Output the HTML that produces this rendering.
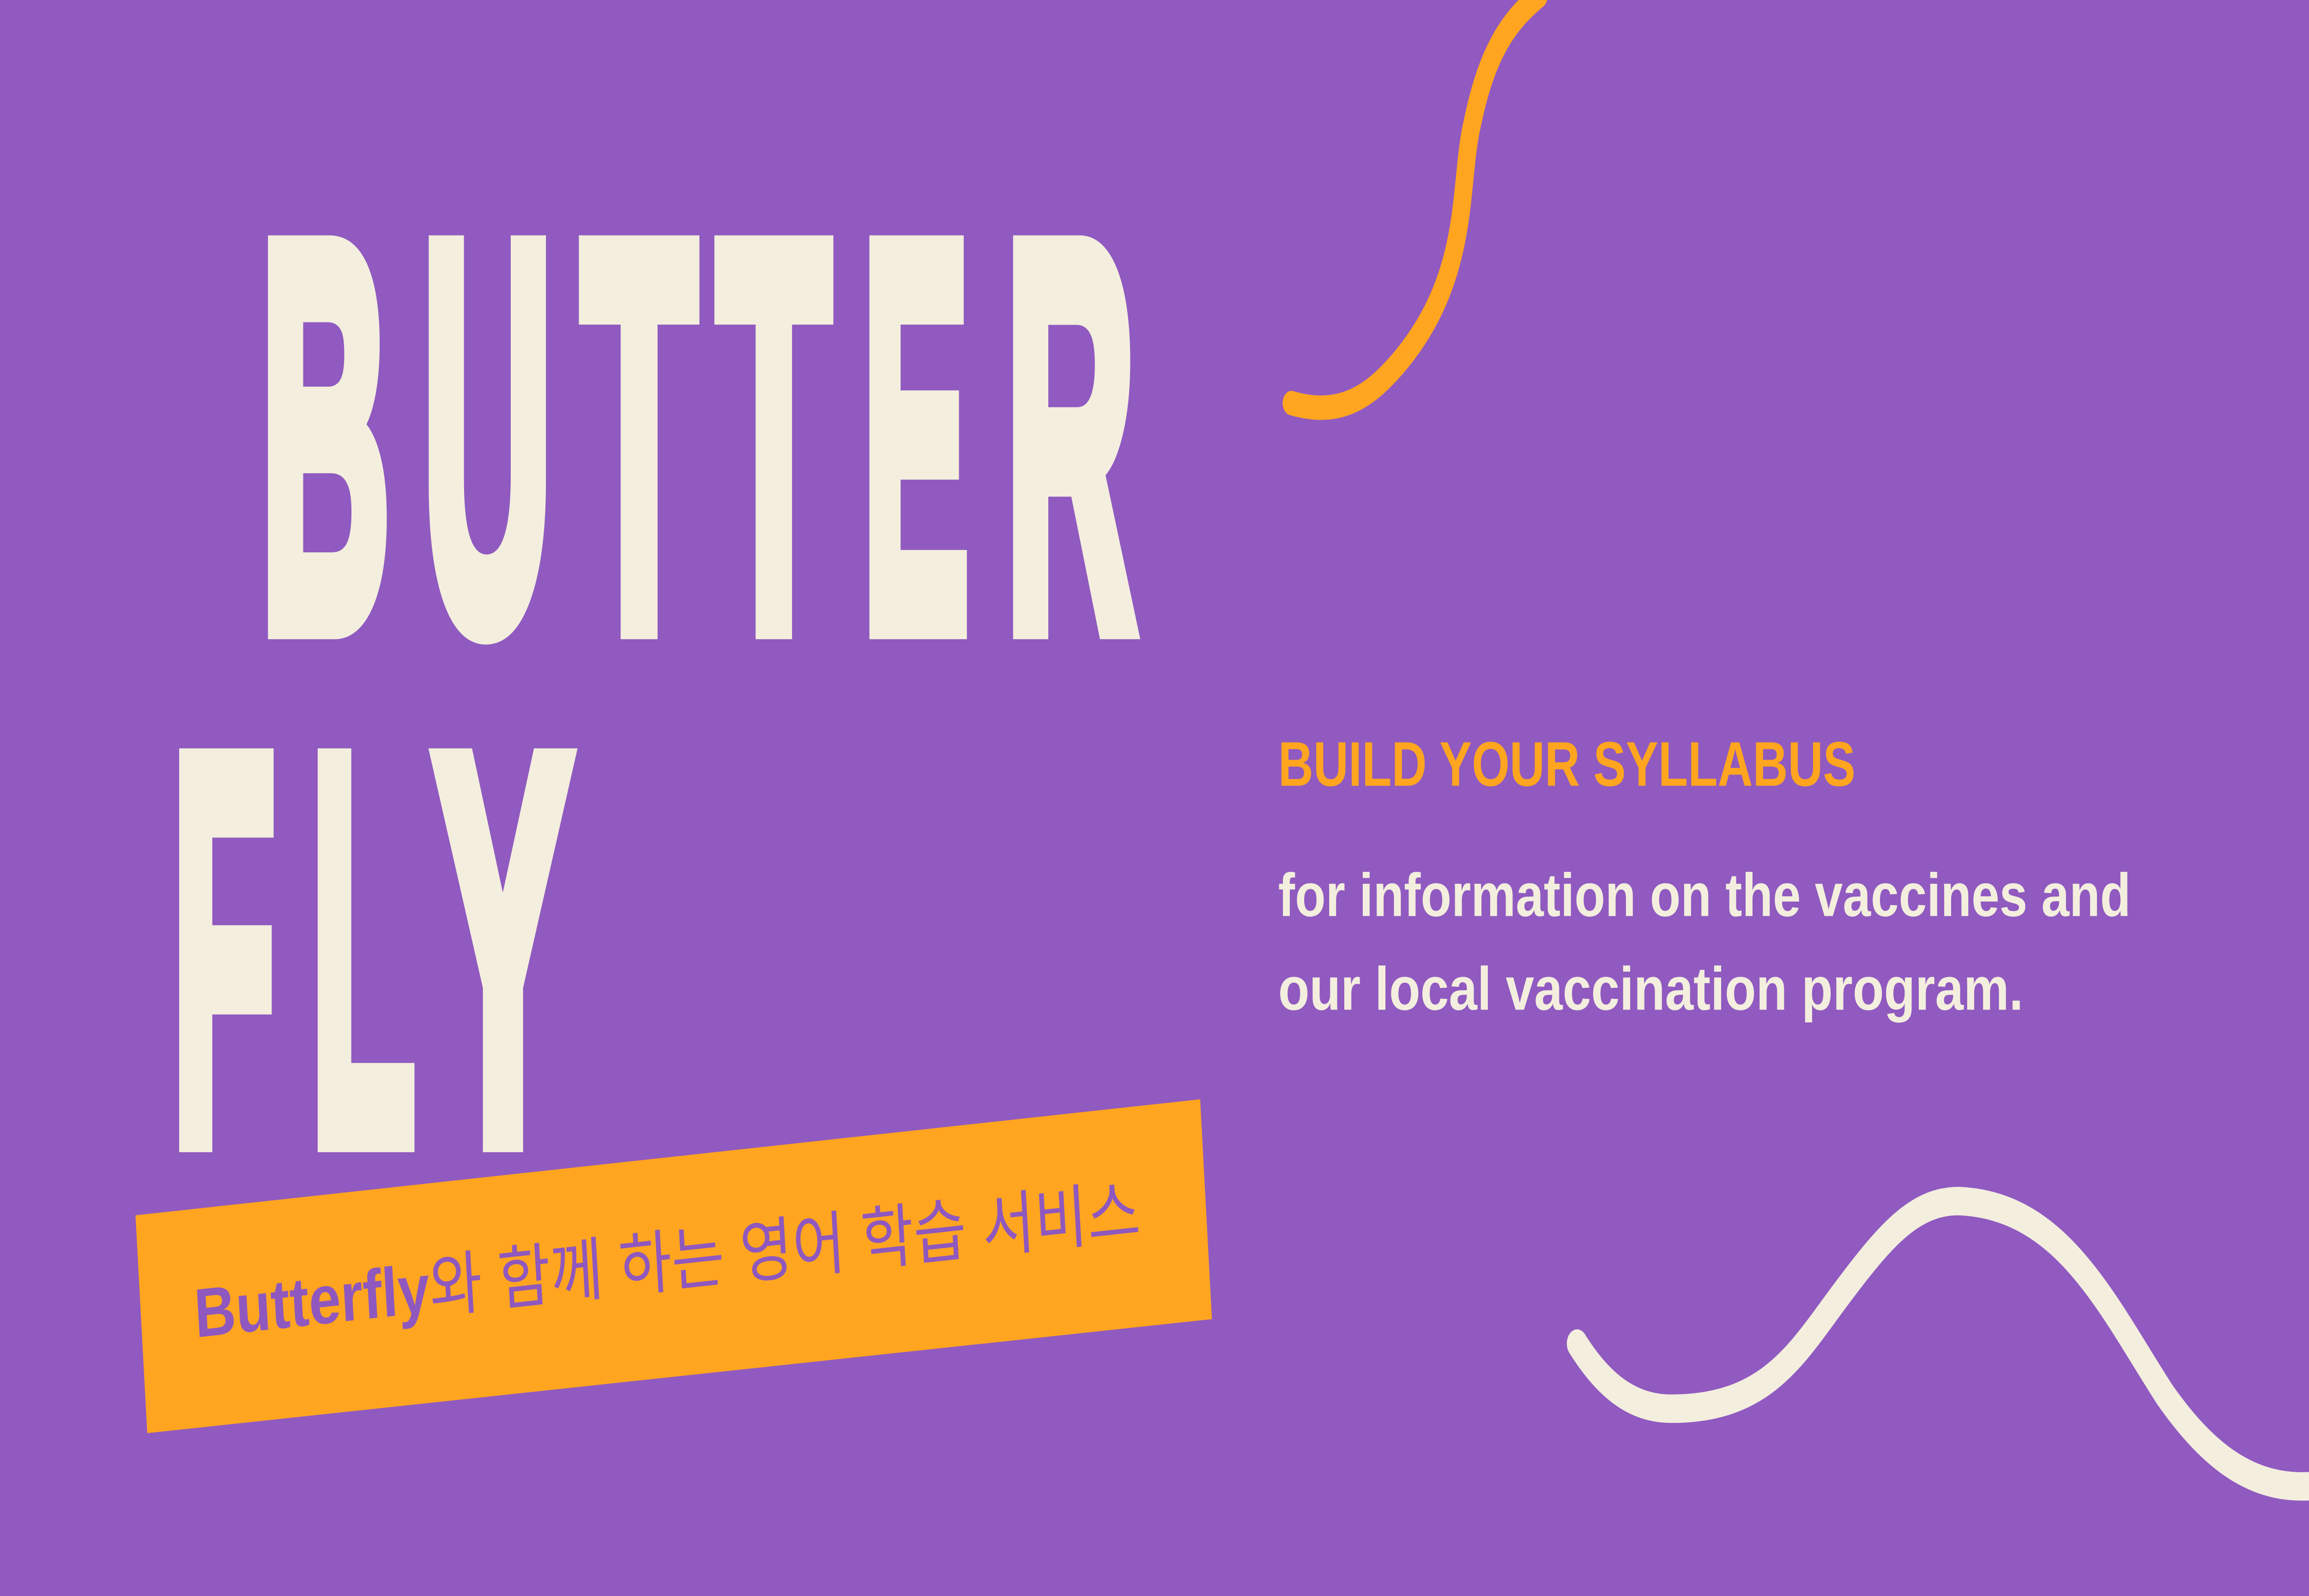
<!DOCTYPE html>
<html><head><meta charset="utf-8"><style>
html,body{margin:0;padding:0;background:#905AC0;width:100%;height:100%;overflow:hidden;}
svg{display:block;width:100vw;height:100vh;}
</style></head><body>
<svg xmlns="http://www.w3.org/2000/svg" viewBox="0 0 1568 784" preserveAspectRatio="none">
<rect width="1568" height="784" fill="#905AC0"/>
<g fill="#F3EEDE" stroke="#F3EEDE" stroke-width="14" stroke-linejoin="miter" font-family="Liberation Sans, sans-serif" font-weight="bold" font-size="268">
<text x="177" y="307" textLength="88" lengthAdjust="spacingAndGlyphs">B</text>
<text x="287" y="307" textLength="88" lengthAdjust="spacingAndGlyphs">U</text>
<text x="395" y="307" textLength="78" lengthAdjust="spacingAndGlyphs">T</text>
<text x="487" y="307" textLength="77" lengthAdjust="spacingAndGlyphs">T</text>
<text x="586" y="307" textLength="72" lengthAdjust="spacingAndGlyphs">E</text>
<text x="683" y="307" textLength="88" lengthAdjust="spacingAndGlyphs">R</text>
<text x="117" y="559" textLength="70" lengthAdjust="spacingAndGlyphs">F</text>
<text x="211" y="559" textLength="71" lengthAdjust="spacingAndGlyphs">L</text>
<text x="295" y="559" textLength="93" lengthAdjust="spacingAndGlyphs">Y</text>
</g>
<path d="M877,198 C910,205 930,195 950,178 C1000,135 990,90 1000,60 C1010,25 1025,10 1045,-2" fill="none" stroke="#FFA51F" stroke-width="12" stroke-linecap="round"/>
<path d="M1071,660 C1090,682 1110,692 1135,692 C1200,692 1220,665 1250,636 C1280,607 1300,590 1330,590 C1400,592 1430,640 1470,685 C1500,716 1530,732 1570,730" fill="none" stroke="#F3EEDE" stroke-width="14" stroke-linecap="round"/>
<polygon points="92,597 815,540 823,648 100,704" fill="#FFA51F"/>
<g transform="rotate(-4.5 133 657)">
<text x="133" y="657" font-size="34" fill="#8F58BE" font-family="Liberation Sans, 'Noto Sans CJK KR', sans-serif" textLength="644" lengthAdjust="spacingAndGlyphs"><tspan font-weight="bold">Butterfly</tspan><tspan>와 함께 하는 영어 학습 서비스</tspan></text>
</g>
<text x="868" y="386" font-size="31" font-weight="bold" fill="#FFA51F" font-family="Liberation Sans, sans-serif" textLength="392" lengthAdjust="spacingAndGlyphs">BUILD YOUR SYLLABUS</text>
<text x="868" y="450" font-size="30" font-weight="bold" fill="#F3EEDE" font-family="Liberation Sans, sans-serif" textLength="579" lengthAdjust="spacingAndGlyphs">for information on the vaccines and</text>
<text x="868" y="496" font-size="30" font-weight="bold" fill="#F3EEDE" font-family="Liberation Sans, sans-serif" textLength="506" lengthAdjust="spacingAndGlyphs">our local vaccination program.</text>
</svg>
</body></html>
